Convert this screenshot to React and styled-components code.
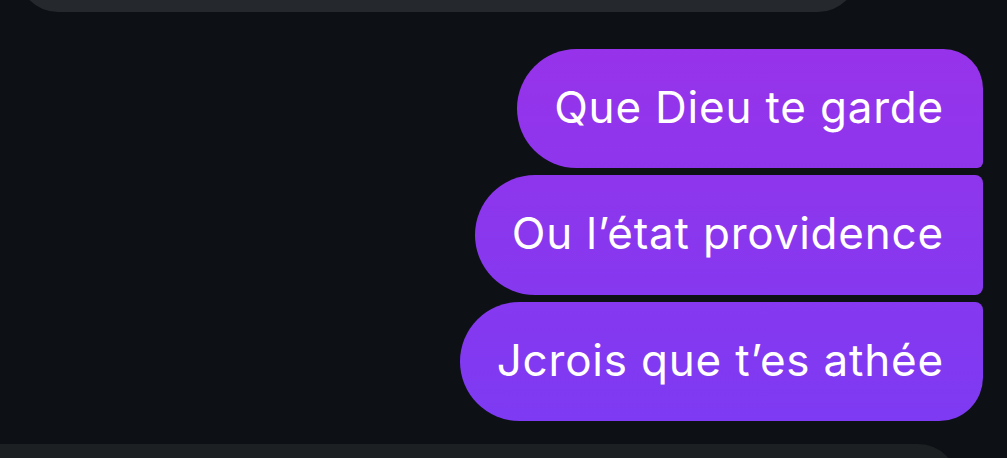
import styled, { createGlobalStyle } from "styled-components";

const GlobalStyle = createGlobalStyle`
  html, body {
    margin: 0;
    padding: 0;
    background: #0d1115;
  }
  body {
    font-family: Inter, "Noto Sans", "Liberation Sans", sans-serif;
    -webkit-font-smoothing: antialiased;
  }
`;

const messages = [
  { id: 1, text: "Que Dieu te garde", pos: "first" },
  { id: 2, text: "Ou l’état providence", pos: "middle" },
  { id: 3, text: "Jcrois que t’es athée", pos: "last" },
];

export default function App() {
  return (
    <>
      <GlobalStyle />
      <Thread>
        <Incoming $top />
        <OutgoingGroup>
          {messages.map((m) => (
            <Bubble key={m.id} $pos={m.pos}>
              {m.text}
            </Bubble>
          ))}
        </OutgoingGroup>
        <Incoming />
      </Thread>
    </>
  );
}

const Thread = styled.div`
  height: 458px;
  overflow: hidden;
  display: flex;
  flex-direction: column;
`;

const Incoming = styled.div`
  flex: none;
  height: 80px;
  border-radius: 40px;
  background: ${(p) => (p.$top ? "#25282c" : "#1d2022")};
  margin: ${(p) => (p.$top ? "-68px 0 0 18px" : "23px 0 0 -40px")};
  width: ${(p) => (p.$top ? "840px" : "998px")};
`;

const OutgoingGroup = styled.div`
  display: flex;
  flex-direction: column;
  align-items: flex-end;
  gap: 7px;
  margin: 37px 24px 0 0;
`;

const radii = {
  first: "60px 40px 6px 60px",
  middle: "60px 8px 8px 60px",
  last: "60px 8px 44px 60px",
};

const Bubble = styled.div`
  box-sizing: border-box;
  height: ${(p) => (p.$pos === "middle" ? "120px" : "119px")};
  display: flex;
  align-items: center;
  padding: 0 39px 4px 37px;
  border-radius: ${(p) => radii[p.$pos]};
  background: linear-gradient(180deg, #9a32e9 0px, #8a37ee 230px, #7b3bf3 458px) fixed;
  color: #ffffff;
  font-size: 44px;
  font-weight: 400;
  letter-spacing: 0.8px;
  white-space: nowrap;
`;
